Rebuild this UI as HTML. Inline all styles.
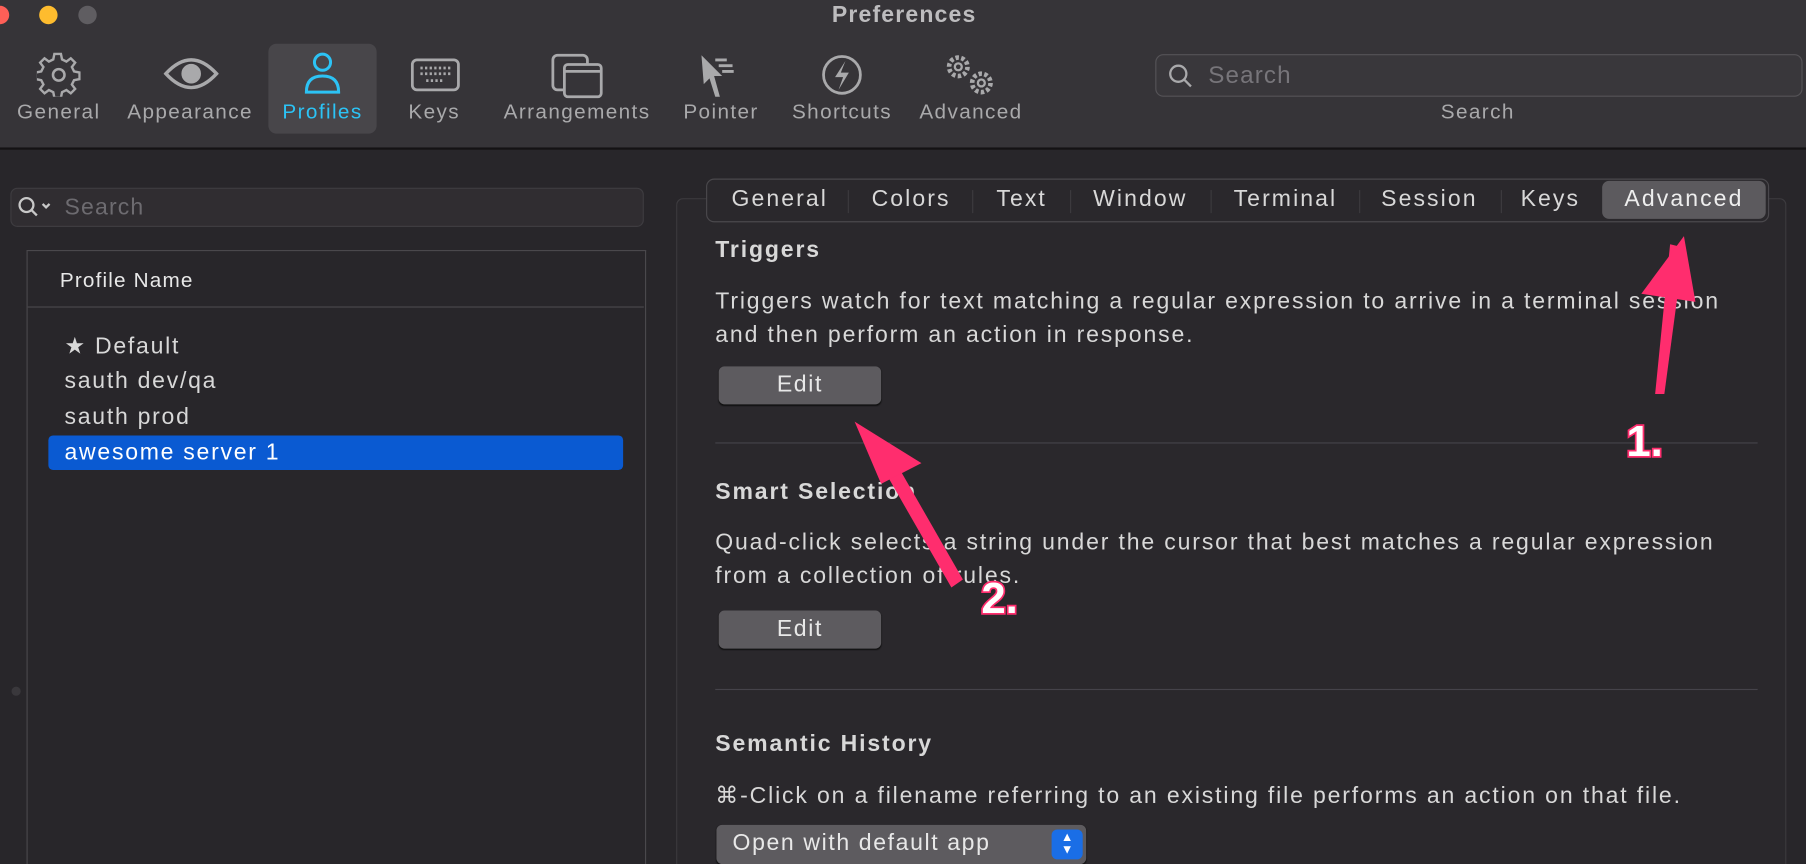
<html><head><style>
body{margin:0;width:1806px;height:864px;overflow:hidden;background:#28262a;font-family:"Liberation Sans",sans-serif}
#w{position:absolute;left:0;top:0;width:1568px;height:750px;transform:scale(1.1518,1.152);transform-origin:0 0;background:#28262a;color:#dcdcdc;overflow:hidden}
.a{position:absolute}
.tb{left:0;top:0;width:1568px;height:128px;background:#363438;border-bottom:2px solid #141214}
.lbl{position:absolute;top:87px;font-size:18px;color:#a9a9ab;transform:translateX(-50%);white-space:nowrap;letter-spacing:1.2px}
.ic{position:absolute;top:44px}
.t{font-size:20px;color:#d8d8d8;white-space:nowrap;letter-spacing:1.6px}
.h{font-size:20px;font-weight:bold;color:#d8d8d8;letter-spacing:1.6px}
.btn{background:#5d5b5f;border-radius:5px;color:#e8e8e8;font-size:20px;text-align:center;line-height:33px;box-shadow:0 1px 1px #111;letter-spacing:1.4px}
.sep{height:1px;background:#45434a}
.tab{position:absolute;top:0;height:37px;line-height:35px;font-size:20px;color:#d8d8d8;transform:translateX(-50%);letter-spacing:1.8px}
.ts{position:absolute;top:9px;width:1px;height:20px;background:#3d3b3f}
</style></head><body><div id="w">
<div class="a tb"></div>
<div class="a" style="left:-8px;top:5px;width:16px;height:16px;border-radius:50%;background:#fe5f57"></div>
<div class="a" style="left:34px;top:5px;width:16px;height:16px;border-radius:50%;background:#febc2e"></div>
<div class="a" style="left:68px;top:5px;width:16px;height:16px;border-radius:50%;background:#5f5d61"></div>
<div class="a" style="left:785px;top:2px;transform:translateX(-50%);font-size:20px;font-weight:bold;color:#bdbcbe;letter-spacing:1px">Preferences</div>
<div class="a" style="left:233px;top:38px;width:94px;height:78px;border-radius:7px;background:#48464a"></div>
<svg class="ic" style="left:32px" width="38" height="40" viewBox="0 0 38 40" fill="none" stroke="#a9a9ab" stroke-width="2.2"><circle cx="19" cy="21" r="5"/><path d="M16 4h6l1 5 4 2 4-3 4 4-3 4 2 4 5 1v6l-5 1-2 4 3 4-4 4-4-3-4 2-1 5h-6l-1-5-4-2-4 3-4-4 3-4-2-4-5-1v-6l5-1 2-4-3-4 4-4 4 3 4-2z" transform="translate(0,-1) scale(0.95)"/></svg>
<svg class="ic" style="left:142px" width="48" height="40" viewBox="0 0 48 40" fill="none" stroke="#a9a9ab" stroke-width="3"><path d="M2 20Q24 -4 46 20Q24 44 2 20z"/><circle cx="24" cy="20" r="7" fill="#a9a9ab"/></svg>
<svg class="ic" style="left:262px" width="36" height="40" viewBox="0 0 36 40" fill="none" stroke="#2cc3f5" stroke-width="2.6"><circle cx="18" cy="10" r="7"/><path d="M4 36Q4 22 18 22Q32 22 32 36z"/></svg>
<svg class="ic" style="left:356px;top:50px" width="44" height="30" viewBox="0 0 44 30" fill="none" stroke="#a9a9ab" stroke-width="2.4"><rect x="2" y="2" width="40" height="26" rx="4"/><path d="M9 9h26M9 14h26M14 20h16" stroke-dasharray="2 2"/></svg>
<svg class="ic" style="left:478px;top:46px" width="46" height="40" viewBox="0 0 46 40" fill="none" stroke="#a9a9ab" stroke-width="2.4"><rect x="2" y="2" width="30" height="30" rx="4"/><rect x="12" y="10" width="32" height="28" rx="3" fill="#363438"/><path d="M12 16h32"/></svg>
<svg class="ic" style="left:607px;top:46px" width="36" height="40" viewBox="0 0 36 40" fill="#a9a9ab"><path d="M2 2L20 20L13 20L18 38L14 38L9 22L4 27z"/><path d="M14 6h10M17 11h12M20 16h10" stroke="#a9a9ab" stroke-width="2.5"/></svg>
<svg class="ic" style="left:712px;top:46px" width="38" height="38" viewBox="0 0 38 38" fill="none" stroke="#a9a9ab" stroke-width="2.4"><circle cx="19" cy="19" r="16"/><path d="M22 7L13 21h7l-4 11 9-15h-7z" fill="#a9a9ab" stroke="none"/></svg>
<svg class="ic" style="left:818px;top:44px" width="50" height="40" viewBox="0 0 50 40" fill="none" stroke="#a9a9ab" stroke-width="2"><circle cx="14" cy="14" r="8" stroke-dasharray="3 2" stroke-width="4"/><circle cx="14" cy="14" r="3"/><circle cx="34" cy="28" r="8" stroke-dasharray="3 2" stroke-width="4"/><circle cx="34" cy="28" r="3"/></svg>
<div class="lbl" style="left:51px">General</div><div class="lbl" style="left:165px">Appearance</div><div class="lbl" style="left:280px;color:#2cc3f5">Profiles</div><div class="lbl" style="left:377px">Keys</div><div class="lbl" style="left:501px">Arrangements</div><div class="lbl" style="left:626px">Pointer</div><div class="lbl" style="left:731px">Shortcuts</div><div class="lbl" style="left:843px">Advanced</div>
<div class="a" style="left:1003px;top:47px;width:560px;height:35px;border:1px solid #555357;border-radius:7px;background:#39373b"></div>
<svg class="a" style="left:1014px;top:55px" width="22" height="22" viewBox="0 0 22 22" fill="none" stroke="#a9a9ab" stroke-width="2"><circle cx="9" cy="9" r="7"/><path d="M14 14l6 6"/></svg>
<div class="a" style="left:1049px;top:54px;font-size:21px;color:#77757a;letter-spacing:1px">Search</div>
<div class="lbl" style="left:1283px">Search</div>

<div class="a" style="left:9px;top:163px;width:548px;height:32px;border:1px solid #3e3c40;border-radius:6px;background:#302d31"></div>
<svg class="a" style="left:15px;top:170px" width="32" height="20" viewBox="0 0 32 20" fill="none" stroke="#c8c8c8" stroke-width="2"><circle cx="8" cy="8" r="6"/><path d="M12 12l5 5M22 7l3 3 3-3"/></svg>
<div class="a" style="left:56px;top:169px;font-size:20px;color:#6d6b70;letter-spacing:1px">Search</div>
<div class="a" style="left:23px;top:217px;width:536px;height:533px;border:1px solid #4a484c;border-bottom:none;background:#28262a"></div>
<div class="a" style="left:52px;top:233px;font-size:18px;color:#e8e8e8;letter-spacing:1px">Profile Name</div>
<div class="a sep" style="left:24px;top:266px;width:535px;background:#4a484c"></div>
<div class="a t" style="left:56px;top:288px;letter-spacing:1.5px">★ Default</div>
<div class="a t" style="left:56px;top:320px;letter-spacing:1.5px">sauth dev/qa</div>
<div class="a t" style="left:56px;top:351px;letter-spacing:1.5px">sauth prod</div>
<div class="a" style="left:42px;top:378px;width:499px;height:30px;border-radius:4px;background:#0a5ad2"></div>
<div class="a t" style="left:56px;top:382px;color:#fff;letter-spacing:1.5px">awesome server 1</div>
<div class="a" style="left:10px;top:596px;width:8px;height:8px;border-radius:50%;background:#3a383c"></div>

<div class="a" style="left:587px;top:172px;width:962px;height:578px;border:1px solid #3d3b3f;border-bottom:none;border-radius:6px 6px 0 0;background:#2a282c"></div>
<div class="a" style="left:613px;top:155px;width:921px;height:36px;border:1px solid #4a484c;border-radius:7px;background:#2a282c">
<div class="a" style="left:777px;top:1px;width:142px;height:33px;border-radius:6px;background:#5c5a5e"></div>
<div class="tab" style="left:63px">General</div><div class="ts" style="left:122px"></div>
<div class="tab" style="left:177px">Colors</div><div class="ts" style="left:230px"></div>
<div class="tab" style="left:273px">Text</div><div class="ts" style="left:315px"></div>
<div class="tab" style="left:376px">Window</div><div class="ts" style="left:437px"></div>
<div class="tab" style="left:502px">Terminal</div><div class="ts" style="left:566px"></div>
<div class="tab" style="left:627px">Session</div><div class="ts" style="left:689px"></div>
<div class="tab" style="left:732px">Keys</div>
<div class="tab" style="left:848px;color:#eee">Advanced</div>
</div>
<div class="a h" style="left:621px;top:206px">Triggers</div>
<div class="a t" style="left:621px;top:248px;line-height:29px">Triggers watch for text matching a regular expression to arrive in a terminal session<br>and then perform an action in response.</div>
<div class="a btn" style="left:624px;top:318px;width:141px;height:33px">Edit</div>
<div class="a sep" style="left:621px;top:384px;width:905px"></div>
<div class="a h" style="left:621px;top:416px">Smart Selection</div>
<div class="a t" style="left:621px;top:457px;line-height:29px">Quad-click selects a string under the cursor that best matches a regular expression<br>from a collection of rules.</div>
<div class="a btn" style="left:624px;top:530px;width:141px;height:33px">Edit</div>
<div class="a sep" style="left:621px;top:598px;width:905px"></div>
<div class="a h" style="left:621px;top:635px">Semantic History</div>
<div class="a t" style="left:621px;top:678px">⌘-Click on a filename referring to an existing file performs an action on that file.</div>
<div class="a btn" style="left:622px;top:716px;width:321px;height:34px;text-align:left;text-indent:14px">Open with default app</div>
<div class="a" style="left:913px;top:720px;width:27px;height:26px;border-radius:5px;background:#1a6ee6;color:#fff;font-size:11px;line-height:11px;text-align:center;padding-top:2px;box-sizing:border-box">▲<br>▼</div>

<svg class="a" style="left:0;top:0" width="1568" height="750">
<g fill="#ff2d6e"><path d="M1437 342L1445 342L1462 215L1450 212z"/><path d="M1425 255L1462 205L1472 262z"/>
<path d="M826 510L836 503L770 388L760 395z"/><path d="M742 366L800 402L765 420z" /></g>
<g font-family="Liberation Sans" font-weight="bold" font-size="38" fill="#fff" stroke="#ff2d6e" stroke-width="3" paint-order="stroke"><text x="1412" y="396">1.</text><text x="852" y="532">2.</text></g>
</svg>
</div></body></html>
